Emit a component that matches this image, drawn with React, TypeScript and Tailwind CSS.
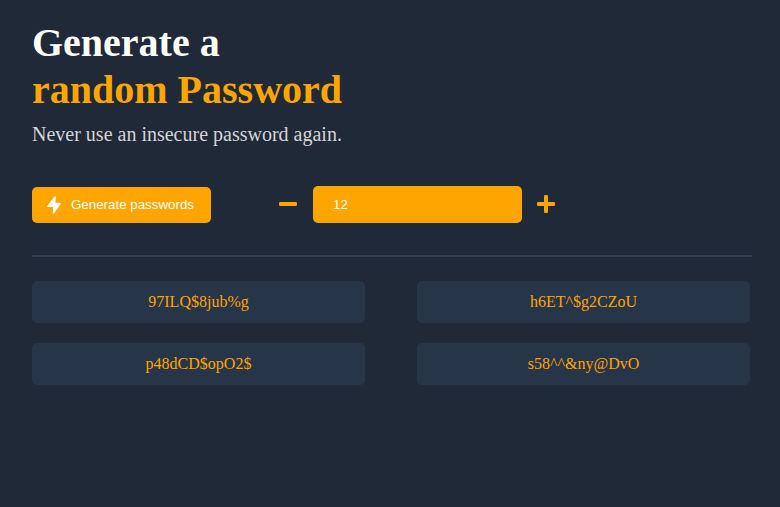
import React from "react";

const passwords = ["97ILQ$8jub%g", "h6ET^$g2CZoU", "p48dCD$opO2$", "s58^^&ny@DvO"];

export default function App() {
  return (
    <main className="h-[507px] overflow-hidden bg-[#1f2937] px-8 pt-[19px] font-['Liberation_Serif',serif]">
      <h1 className="text-[40px] leading-[47px] font-bold text-white">
        Generate a<br />
        <span className="text-[#ffa500]">random Password</span>
      </h1>
      <p className="mt-[10px] text-xl leading-[23px] text-[#d5d4d8]">Never use an insecure password again.</p>
      <div className="mt-10 flex h-[37px] items-center">
        <button className="mt-px flex h-9 w-[179px] items-center rounded-[5px] bg-[#ffa500] pl-[15px] font-['Liberation_Sans',sans-serif] text-[13.333px] text-white">
          <svg viewBox="0 0 14 18" className="mr-[10px] h-[18px] w-[14px] shrink-0" fill="currentColor" aria-hidden="true">
            <path d="M8.2 0.2Q9 0 8.9 0.9L8.4 6.8H13.2Q14.3 6.9 13.7 7.9L7 17.5Q6.2 18.3 5.9 17.3L6.1 11.1H0.7Q-0.3 11 0.3 10.1L7.2 0.7Z" />
          </svg>
          Generate passwords
        </button>
        <button aria-label="Decrease length" className="ml-[68px] mb-[2px] text-[#ffa500]">
          <svg viewBox="0 0 18 18" className="size-[18px]" aria-hidden="true">
            <rect x="0" y="7" width="18" height="4" rx="1.2" fill="currentColor" />
          </svg>
        </button>
        <input
          defaultValue="12"
          className="ml-4 h-[37px] w-[209px] rounded-[5px] bg-[#ffa500] px-5 font-['Liberation_Sans',sans-serif] text-[13.333px] text-white outline-none"
        />
        <button aria-label="Increase length" className="ml-[15px] mb-[2px] text-[#ffa500]">
          <svg viewBox="0 0 18 18" className="size-[18px]" fill="currentColor" aria-hidden="true">
            <rect x="0" y="7" width="18" height="4" rx="1.2" />
            <rect x="7" y="0" width="4" height="18" rx="1.2" />
          </svg>
        </button>
      </div>
      <hr className="mt-8 w-[720px] border-t-2 border-[#2f3e53]" />
      <section className="mt-6 grid w-[718px] grid-cols-2 gap-x-[52px] gap-y-5">
        {passwords.map((password) => (
          <div key={password} className="flex h-[42px] items-center justify-center rounded-[5px] bg-[#273549] text-base text-[#ffa500]">
            {password}
          </div>
        ))}
      </section>
    </main>
  );
}
